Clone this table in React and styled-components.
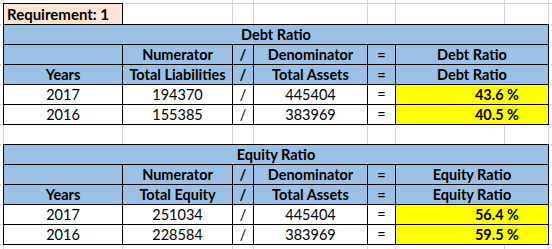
import React from "react";
import styled, { createGlobalStyle } from "styled-components";

const GlobalStyle = createGlobalStyle`
  html, body { margin: 0; padding: 0; background: #fff; }
  body { font-family: Lato, "Open Sans", sans-serif; color: #000; }
`;

const Sheet = styled.div`
  display: grid;
  grid-template-columns: 3px 118px 109px 20px 113px 27px 108px 43px 1fr;
  grid-template-rows: 3px 20px repeat(11, 19px) 1fr;
  gap: 1px;
  width: 552px;
  height: 249px;
  overflow: hidden;
  background: #d4d4d4;
  font-size: 14.5px;
`;

const Blank = styled.div`
  background: #fff;
`;

const Requirement = styled.div`
  grid-column: 2;
  grid-row: 2;
  background: #fce4d6;
  outline: 1px solid #000;
  font-weight: 700;
  font-size: 15px;
  padding-left: 3px;
  display: flex;
  align-items: center;
  white-space: nowrap;
  position: relative;
  z-index: 1;
`;

const RatioTable = styled.div`
  grid-column: 2 / 9;
  grid-row: ${(p) => p.$row} / span 5;
  display: grid;
  grid-template-columns: 118px 109px 20px 113px 27px 152px;
  grid-auto-rows: 19px;
  gap: 1px;
  background: #000;
  outline: 1px solid #000;
  position: relative;
  z-index: 1;
`;

const CellBase = styled.div`
  display: flex;
  align-items: center;
  justify-content: center;
  white-space: nowrap;
  line-height: 19px;
  overflow: hidden;
`;

const Title = styled(CellBase)`
  grid-column: 1 / -1;
  background: #9bc2e6;
  font-weight: 700;
`;

const Head = styled(CellBase)`
  background: #9bc2e6;
  font-weight: 700;
`;

const Cell = styled(CellBase)`
  background: #fff;
`;

const Result = styled(CellBase)`
  background: #ffff00;
  font-weight: 700;
  justify-content: flex-end;
  padding-right: 29px;
`;

function Ratio({ row, title, numerator, rows }) {
  return (
    <RatioTable $row={row}>
      <Title>{title}</Title>
      <Head />
      <Head>Numerator</Head>
      <Head>/</Head>
      <Head>Denominator</Head>
      <Head>=</Head>
      <Head>{title}</Head>
      <Head>Years</Head>
      <Head>{numerator}</Head>
      <Head>/</Head>
      <Head>Total Assets</Head>
      <Head>=</Head>
      <Head>{title}</Head>
      {rows.map((r) => (
        <React.Fragment key={r.year}>
          <Cell>{r.year}</Cell>
          <Cell>{r.num}</Cell>
          <Cell>/</Cell>
          <Cell>{r.den}</Cell>
          <Cell>=</Cell>
          <Result>{r.pct}</Result>
        </React.Fragment>
      ))}
    </RatioTable>
  );
}

export default function App() {
  const blanks = Array.from({ length: 126 - 71 });
  return (
    <>
      <GlobalStyle />
      <Sheet>
        <Requirement>Requirement: 1</Requirement>
        <Ratio
          row={3}
          title="Debt Ratio"
          numerator="Total Liabilities"
          rows={[
            { year: "2017", num: "194370", den: "445404", pct: "43.6 %" },
            { year: "2016", num: "155385", den: "383969", pct: "40.5 %" },
          ]}
        />
        <Ratio
          row={9}
          title="Equity Ratio"
          numerator="Total Equity"
          rows={[
            { year: "2017", num: "251034", den: "445404", pct: "56.4 %" },
            { year: "2016", num: "228584", den: "383969", pct: "59.5 %" },
          ]}
        />
        {blanks.map((_, i) => (
          <Blank key={i} />
        ))}
      </Sheet>
    </>
  );
}
